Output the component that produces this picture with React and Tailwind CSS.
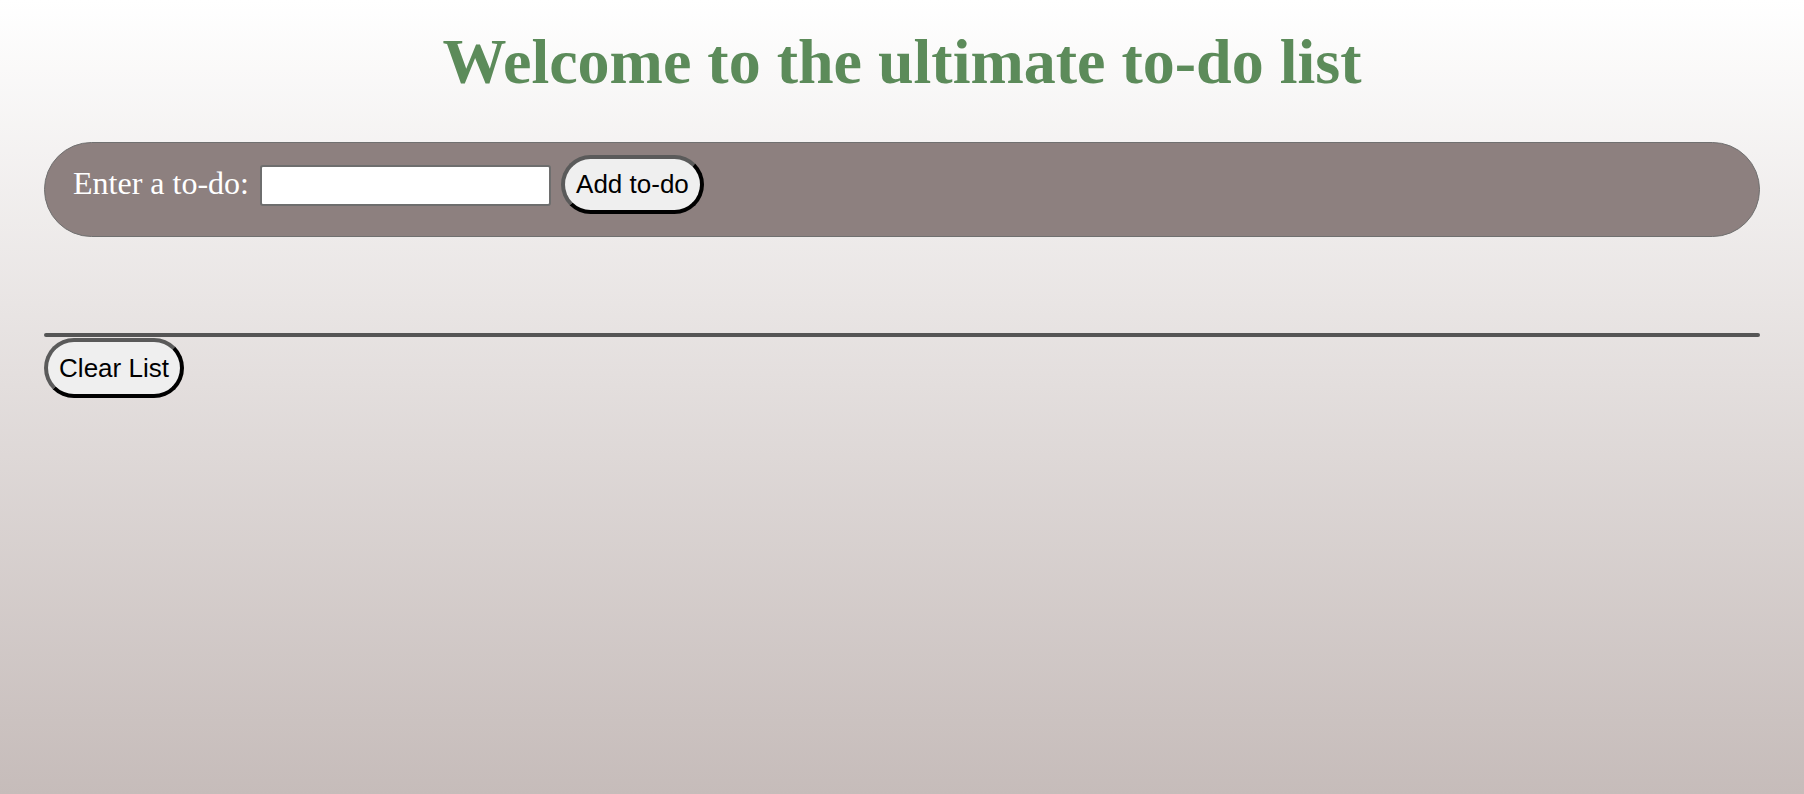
import { useState } from "react";

const serif = { fontFamily: '"Liberation Serif", "Times New Roman", serif' };
const sans = { fontFamily: '"Liberation Sans", Arial, sans-serif' };

function PillButton({ children, className = "", onClick }) {
  return (
    <button
      onClick={onClick}
      style={sans}
      className={
        "flex items-center justify-center rounded-full border-[4px] border-t-[#5a5a5a] border-l-[#5a5a5a] border-r-black border-b-black bg-[#efefef] text-[26px] text-black " +
        className
      }
    >
      {children}
    </button>
  );
}

export default function App() {
  const [text, setText] = useState("");
  const [todos, setTodos] = useState([]);

  const add = (e) => {
    e.preventDefault();
    if (!text.trim()) return;
    setTodos([...todos, text.trim()]);
    setText("");
  };

  return (
    <div className="min-h-screen bg-gradient-to-b from-white to-[#c6bcba] px-[44px]">
      <h1
        style={serif}
        className="pt-[26px] text-center text-[64px] font-bold leading-[72px] text-[#5c8b5a]"
      >
        Welcome to the ultimate to-do list
      </h1>

      <form
        onSubmit={add}
        className="mt-[44px] flex h-[95px] items-center rounded-full border border-[#707070] bg-[#8d807f] pb-[10px] pl-[28px]"
      >
        <label style={serif} className="mb-[4px] text-[32px] text-white">
          Enter a to-do:
        </label>
        <input
          value={text}
          onChange={(e) => setText(e.target.value)}
          className="ml-[11px] mt-[2px] h-[41px] w-[291px] rounded-[3px] border-2 border-[#6e6e6e] bg-white px-1 text-[22px] outline-none"
        />
        <PillButton className="ml-[10px] h-[59px] w-[143px]">Add to-do</PillButton>
      </form>

      <ul className="h-[96px]">
        {todos.map((t, i) => (
          <li key={i} style={serif} className="text-[24px]">
            {t}
          </li>
        ))}
      </ul>

      <div className="h-[4px] rounded-full bg-[#555555]" />
      <PillButton className="mt-[1px] h-[60px] w-[140px]" onClick={() => setTodos([])}>
        Clear List
      </PillButton>
    </div>
  );
}
